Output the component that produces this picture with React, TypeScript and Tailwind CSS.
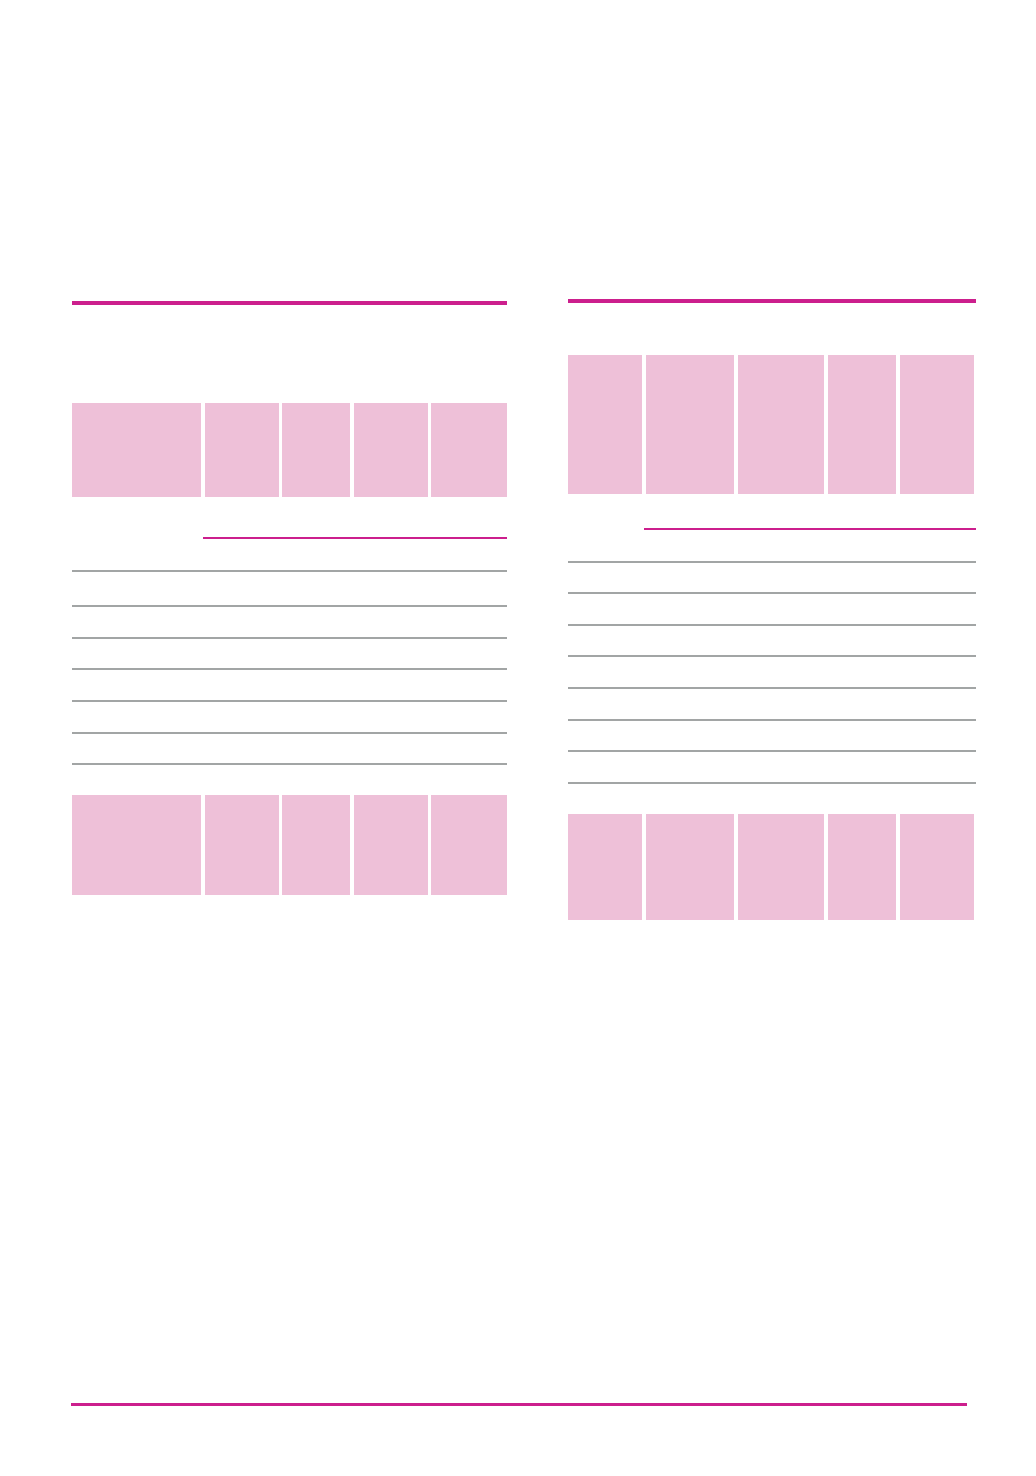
import React from "react";

const MAGENTA = "bg-[#cc1f8d]";
const PINK = "bg-[#eec0d8]";

// cell widths per column, table by table
const leftCells = ["w-[129px]", "w-[74px]", "w-[68px]", "w-[74px]", "w-[76px]"];
const rightCells = ["w-[74px]", "w-[88px]", "w-[86px]", "w-[68px]", "w-[74px]"];

// distance between consecutive gray rules
const leftRows = [35, 32, 31, 32, 32, 31];
const rightRows = [31, 32, 31, 32, 32, 31, 32];

function CellRow({ cells, height, gap }: { cells: string[]; height: string; gap: string }) {
  return (
    <div className={`flex ${gap} ${height}`}>
      {cells.map((w, i) => (
        <div key={i} className={`${w} h-full ${PINK}`} />
      ))}
    </div>
  );
}

function GrayLine() {
  return <div className="h-[2px] bg-[#a2a5a5] shrink-0" />;
}

function Rules({ rows }: { rows: number[] }) {
  return (
    <>
      <GrayLine />
      {rows.map((h, i) => (
        <React.Fragment key={i}>
          <div className="shrink-0" style={{ height: h - 2 }} />
          <GrayLine />
        </React.Fragment>
      ))}
    </>
  );
}

function LeftTable() {
  return (
    <div className="w-[435px] mt-[3px] flex flex-col">
      <div className={`h-[3.5px] ${MAGENTA}`} />
      <div className="mt-[98.5px]">
        <CellRow cells={leftCells} height="h-[94px]" gap="gap-[3.5px]" />
      </div>
      {/* sub-header rule over the number columns */}
      <div className={`mt-[40px] ml-[131px] h-[1.5px] ${MAGENTA}`} />
      <div className="h-[31px]" />
      <Rules rows={leftRows} />
      <div className="mt-[30px]">
        <CellRow cells={leftCells} height="h-[100px]" gap="gap-[3.5px]" />
      </div>
    </div>
  );
}

function RightTable() {
  return (
    <div className="w-[408px] mt-[1px] flex flex-col">
      <div className={`h-[3.5px] ${MAGENTA}`} />
      <div className="mt-[52.5px]">
        <CellRow cells={rightCells} height="h-[139px]" gap="gap-[4px]" />
      </div>
      <div className={`mt-[34px] ml-[76px] h-[1.5px] ${MAGENTA}`} />
      <div className="h-[31px]" />
      <Rules rows={rightRows} />
      <div className="mt-[30px]">
        <CellRow cells={rightCells} height="h-[106px]" gap="gap-[4px]" />
      </div>
    </div>
  );
}

export default function App() {
  return (
    <div
      className="w-[1036px] h-[1476px] bg-white flex flex-col"
      style={{ fontFamily: '"Liberation Sans", Arial, sans-serif' }}
    >
      <div className="flex items-start gap-[61px] pl-[72px] pt-[298px]">
        <LeftTable />
        <RightTable />
      </div>
      <div className={`mt-auto mb-[70px] ml-[71px] w-[896px] h-[3px] ${MAGENTA}`} />
    </div>
  );
}
